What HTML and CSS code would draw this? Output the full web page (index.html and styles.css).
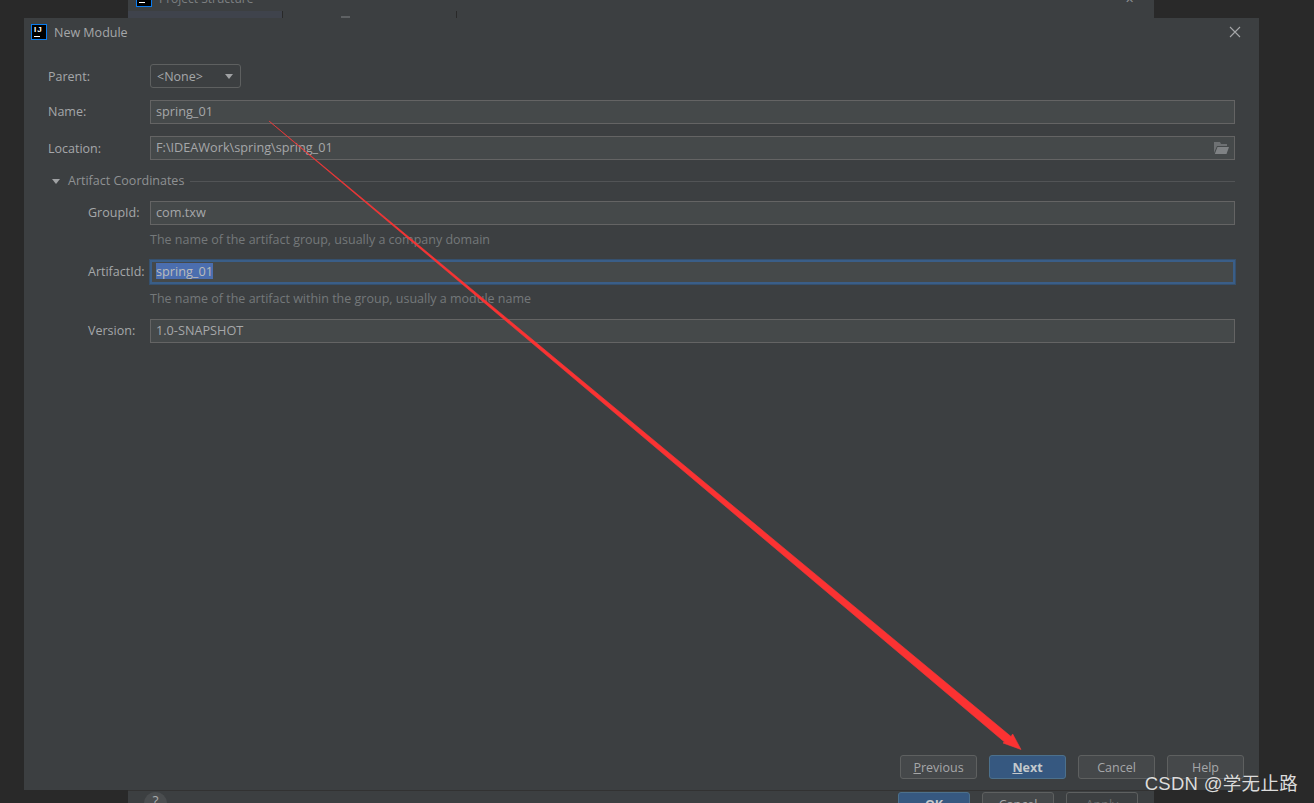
FILE: index.html
```html
<!DOCTYPE html>
<html lang="en">
<head>
    <meta charset="UTF-8">
    <title>New Module</title>
    <link rel="stylesheet" href="styles.css">
</head>
<body>
    <!-- Parent window behind the dialog -->
    <div class="parent-window">
        <div class="parent-title">
            <span class="parent-logo"><span class="parent-logo-bar"></span></span>
            <span class="parent-title-text">Project Structure</span>
            <span class="parent-close">&#10005;</span>
        </div>
        <div class="parent-strip">
            <span class="parent-strip-active"></span>
            <span class="parent-grip"></span>
            <span class="parent-strip-sep"></span>
        </div>
        <div class="parent-footer">
            <span class="help-round">?</span>
            <div class="parent-buttons">
                <button class="btn btn-small btn-primary btn-next">OK</button>
                <button class="btn btn-small">Cancel</button>
                <button class="btn btn-small btn-disabled">Apply</button>
            </div>
        </div>
    </div>

    <!-- New Module dialog -->
    <div class="dialog">
        <div class="dialog-title">
            <div class="ij-logo">
                <span class="ij-letters">IJ</span>
                <span class="ij-bar"></span>
            </div>
            <span class="dialog-title-text">New Module</span>
            <svg class="close-icon" width="12" height="12" viewBox="0 0 12 12">
                <path d="M1 1 L11 11 M11 1 L1 11" stroke="#a5a7a8" stroke-width="1.1" fill="none"/>
            </svg>
        </div>

        <div class="form">
            <div class="row row-parent">
                <label class="label label-low">Parent:</label>
                <div class="select">
                    <span>&lt;None&gt;</span>
                    <span class="select-arrow"></span>
                </div>
            </div>
            <div class="row row-name">
                <label class="label">Name:</label>
                <div class="input">spring_01</div>
            </div>
            <div class="row row-location">
                <label class="label label-low">Location:</label>
                <div class="input input-browse">
                    <span>F:\IDEAWork\spring\spring_01</span>
                    <svg class="folder-icon" width="15" height="13" viewBox="0 0 15 13">
                        <path d="M0 0 H6 L7 2 H13 V4 H3 L0 11 Z" fill="#6e7173"/>
                        <path d="M3.5 5 H15 L12.5 12 H0.8 Z" fill="#7f8284"/>
                    </svg>
                </div>
            </div>

            <div class="section-head">
                <span class="section-arrow"></span>
                <span class="section-title">Artifact Coordinates</span>
                <span class="section-line"></span>
            </div>

            <div class="row row-sub">
                <label class="label label-sub">GroupId:</label>
                <div class="input">com.txw</div>
            </div>
            <p class="hint">The name of the artifact group, usually a company domain</p>
            <div class="row row-sub">
                <label class="label label-sub">ArtifactId:</label>
                <div class="input input-focus"><span class="selected">spring_01</span></div>
            </div>
            <p class="hint">The name of the artifact within the group, usually a module name</p>
            <div class="row row-sub">
                <label class="label label-sub">Version:</label>
                <div class="input">1.0-SNAPSHOT</div>
            </div>
        </div>

        <div class="dialog-buttons">
            <button class="btn"><u>P</u>revious</button>
            <button class="btn btn-primary btn-next"><u>N</u>ext</button>
            <button class="btn">Cancel</button>
            <button class="btn">Help</button>
        </div>
    </div>

    <!-- Annotation arrow drawn on top of the screenshot -->
    <svg class="annotation" width="1314" height="803" viewBox="0 0 1314 803">
        <path class="arrow-shape" d="M269 121 L1011 736.5 L1012.7 734 L1021 749.5 L1003 743 L1004.5 742 Z"/>
    </svg>

    <div class="watermark">CSDN @学无止路</div>
</body>
</html>
```

FILE: styles.css
```css
* {
    box-sizing: border-box;
}

html, body {
    height: 100%;
}

body {
    margin: 0;
    background: #292929;
    overflow: hidden;
    position: relative;
    font-family: 'Open Sans', 'Noto Sans', sans-serif;
    font-size: 12.5px;
    color: #a5a7a9;
}

/* Parent window */
.parent-window {
    position: absolute;
    left: 128px;
    top: -14px;
    width: 1026px;
    height: 817px;
    background: #3c3f41;
    display: flex;
    flex-direction: column;
    overflow: hidden;
}

.parent-title {
    height: 25px;
    flex: none;
    padding: 0 20px 0 8px;
    display: flex;
    align-items: center;
    gap: 7px;
    color: #7c7f81;
    font-size: 12px;
}

.parent-logo {
    width: 16px;
    height: 16px;
    background: #000;
    border: 1px solid #0a7cf0;
    display: flex;
    align-items: flex-end;
    padding: 0 0 3px 2px;
}

.parent-logo-bar {
    width: 6px;
    height: 1px;
    background: #fff;
}

.parent-title-text {
    flex: 1;
}

.parent-close {
    font-size: 11px;
    color: #8d8f91;
}

.parent-strip {
    height: 7px;
    flex: none;
    display: flex;
}

.parent-strip-active {
    width: 155px;
    background: #3f434c;
    border-right: 1px solid #292929;
}

.parent-grip {
    width: 9px;
    height: 2px;
    background: #5e6163;
    margin: 5px 0 0 58px;
}

.parent-strip-sep {
    width: 1px;
    background: #292929;
    margin-left: 106px;
}

.parent-footer {
    margin-top: auto;
    height: 13px;
    flex: none;
    border-top: 1px solid #323232;
    display: flex;
    padding: 1px 16px 0 16px;
    justify-content: space-between;
}

.help-round {
    width: 23px;
    height: 23px;
    flex: none;
    border-radius: 50%;
    background: #4a4d4f;
    text-align: center;
    font-size: 14px;
    line-height: 17px;
    color: #a9abad;
}

.parent-buttons {
    display: flex;
    gap: 12px;
}

/* Dialog */
.dialog {
    position: absolute;
    left: 24px;
    top: 18px;
    width: 1235px;
    height: 772px;
    background: #3c3f41;
    display: flex;
    flex-direction: column;
}

.dialog-title {
    height: 28px;
    padding: 6px 18px 0 7px;
    display: flex;
    align-items: flex-start;
}

.ij-logo {
    width: 16px;
    height: 16px;
    background: #000;
    border: 1px solid #0a7cf0;
    position: relative;
}

.ij-letters {
    position: absolute;
    left: 2px;
    top: 1px;
    font-family: 'Liberation Sans', sans-serif;
    font-size: 8px;
    line-height: 8px;
    font-weight: 700;
    color: #fff;
    letter-spacing: 1px;
}

.ij-bar {
    position: absolute;
    left: 2px;
    bottom: 2px;
    width: 6px;
    height: 1px;
    background: #fff;
}

.dialog-title-text {
    margin-left: 7px;
    flex: 1;
    line-height: 18px;
}

.close-icon {
    margin-top: 2px;
}

.form {
    padding: 18px 24px 0 24px;
}

.row {
    display: flex;
    align-items: center;
    height: 24px;
}

.row-parent {
    margin-bottom: 12px;
}

.row-name {
    margin-bottom: 12px;
}

.label {
    width: 102px;
    flex: none;
    padding-bottom: 2px;
}

.label-low {
    padding-bottom: 0;
}

.label-sub {
    padding-left: 40px;
    white-space: nowrap;
}

.select {
    width: 91px;
    height: 24px;
    border: 1px solid #5e6060;
    border-radius: 3px;
    display: flex;
    align-items: center;
    justify-content: space-between;
    padding: 0 4px 0 6px;
}

.select-arrow, .section-arrow {
    width: 0;
    height: 0;
    border-left: 4px solid transparent;
    border-right: 4px solid transparent;
    border-top: 5px solid #a0a2a4;
}

.select-arrow {
    margin-right: 3px;
}

.input {
    flex: 1;
    height: 24px;
    border: 1px solid #646464;
    background: #45494a;
    padding: 0 5px 2px;
    display: flex;
    align-items: center;
    font-size: 12.7px;
    color: #a5a7a9;
}

.input-browse {
    justify-content: space-between;
}

.folder-icon {
    margin-top: 2px;
}

.input-focus {
    border: 2px solid #3a5e88;
    box-shadow: 0 0 0 1px #35506e;
    padding: 0 4px 2px;
}

.selected {
    background: #4b6eaf;
    color: #bbbbbb;
    line-height: 16px;
}

.section-head {
    display: flex;
    align-items: center;
    height: 20px;
    margin-top: 11px;
    margin-bottom: 10px;
    padding-left: 4px;
}

.section-arrow {
    margin-right: 8px;
}

.section-title {
    color: #8f9193;
    white-space: nowrap;
    padding-bottom: 2px;
}

.section-line {
    flex: 1;
    height: 1px;
    background: #525456;
    margin-left: 6px;
}

.hint {
    margin: 0 0 0 102px;
    height: 35px;
    line-height: 30px;
    color: #74787a;
}

.dialog-buttons {
    margin-top: auto;
    padding: 0 15px 11px 0;
    display: flex;
    justify-content: flex-end;
    gap: 12px;
}

/* Buttons */
.btn {
    width: 77px;
    height: 24px;
    flex: none;
    padding: 0;
    border: 1px solid #5e6060;
    border-radius: 3px;
    background: #45484a;
    color: #a5a7a9;
    font-family: inherit;
    font-size: 12.5px;
}

.btn-primary {
    background: #365880;
    border-color: #4c708c;
    color: #c4c9cc;
}

.btn-next {
    font-weight: 700;
}

.btn-small {
    width: 72px;
}

.btn-disabled {
    background: #3c3f41;
    color: #6a6d6f;
}

/* Annotation and watermark */
.annotation {
    position: absolute;
    left: 0;
    top: 0;
    pointer-events: none;
}

.arrow-shape {
    fill: #fb3232;
    stroke: #f03a3a;
    stroke-width: 0.6;
}

.watermark {
    position: absolute;
    right: 16px;
    bottom: 8px;
    font-family: 'Liberation Sans', 'Noto Sans CJK SC', sans-serif;
    font-size: 18.5px;
    letter-spacing: 0.3px;
    line-height: 22px;
    color: #dcdcdc;
    text-shadow: 0 0 1px #333;
}
```
